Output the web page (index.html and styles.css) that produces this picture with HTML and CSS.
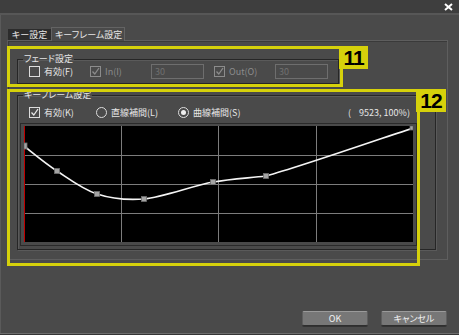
FILE: index.html
```html
<!DOCTYPE html>
<html lang="ja">
<head>
  <meta charset="UTF-8" />
  <title>キーフレーム設定</title>
  <link rel="stylesheet" href="styles.css">
</head>
<body>
  <div class="window">
    <div class="titlebar">
      <svg class="close" width="9" height="8" viewBox="0 0 9 8">
        <path d="M1 1 L8 7 M8 1 L1 7" stroke="#fff" stroke-width="2" fill="none"/>
      </svg>
    </div>

    <div class="tabs">
      <div class="tab">キー設定</div>
      <div class="tab active">キーフレーム設定</div>
    </div>

    <div class="page">
      <fieldset class="group fade">
        <legend>フェード設定</legend>
        <div class="row">
          <label class="opt w61"><span class="cb"></span>有効(F)</label>
          <label class="opt w61 off"><span class="cb checked"><svg width="9" height="9" viewBox="0 0 9 9"><path d="M1.5 4.5 L3.8 7 L8 1" stroke="#8c8c8c" stroke-width="1.3" fill="none"/></svg></span>In(I)</label>
          <div class="num">30</div>
          <label class="opt w61 off gap"><span class="cb checked"><svg width="9" height="9" viewBox="0 0 9 9"><path d="M1.5 4.5 L3.8 7 L8 1" stroke="#8c8c8c" stroke-width="1.3" fill="none"/></svg></span>Out(O)</label>
          <div class="num">30</div>
        </div>
      </fieldset>

      <fieldset class="group keys">
        <legend>キーフレーム設定</legend>
        <div class="row keyrow">
          <label class="opt w67"><span class="cb checked"><svg width="9" height="9" viewBox="0 0 9 9"><path d="M1.5 4.5 L3.8 7 L8 1" stroke="#e8e8e8" stroke-width="1.3" fill="none"/></svg></span>有効(K)</label>
          <label class="opt w82"><span class="rd"></span>直線補間(L)</label>
          <label class="opt w170"><span class="rd on"><span class="dot"></span></span>曲線補間(S)</label>
          <span class="value">(    9523, 100%)</span>
        </div>
        <div class="plot-frame">
          <svg class="plot" width="389" height="116" viewBox="0 0 389 116">
            <rect width="389" height="116" fill="#000"/>
            <g stroke="#7c7c7c" stroke-width="1">
              <line x1="97.5" y1="0" x2="97.5" y2="116"/>
              <line x1="194.5" y1="0" x2="194.5" y2="116"/>
              <line x1="292.5" y1="0" x2="292.5" y2="116"/>
              <line x1="0" y1="29.5" x2="389" y2="29.5"/>
              <line x1="0" y1="58.5" x2="389" y2="58.5"/>
              <line x1="0" y1="87.5" x2="389" y2="87.5"/>
            </g>
            <line x1="0.5" y1="0" x2="0.5" y2="116" stroke="#c00000"/>
            <path d="M0 20 C5.5 24.2 20.8 37 33 45 C45.2 53 58.5 63.3 73 68 C87.5 72.7 100.7 74.5 120 73 C139.3 71 168.7 59.8 189 56 C207 53 225 52 242 50 C275.3 41 364.5 10 389 2"
                  stroke="#f4f4f4" stroke-width="1.7" fill="none"/>
            <g fill="#a4a4a4" stroke="#6e6e6e" stroke-width="0.8">
              <rect x="0" y="17" width="3" height="6"/>
              <rect x="30.5" y="42.5" width="5" height="5"/>
              <rect x="70.5" y="65.5" width="5" height="5"/>
              <rect x="117.5" y="70.5" width="5" height="5"/>
              <rect x="186.5" y="53.5" width="5" height="5"/>
              <rect x="239.5" y="47.5" width="5" height="5"/>
              <rect x="386" y="0" width="3" height="4"/>
            </g>
          </svg>
        </div>
      </fieldset>
    </div>

    <div class="footer">
      <button class="btn">OK</button>
      <button class="btn">キャンセル</button>
    </div>
    <div class="bottom-line"></div>

    <!-- annotation overlays -->
    <div class="mark mark-11"></div>
    <div class="tag tag-11">11</div>
    <div class="mark mark-12"></div>
    <div class="tag tag-12">12</div>
  </div>
</body>
</html>
```

FILE: styles.css
```css
html, body {
  margin: 0; padding: 0;
  background: #4a4a4a;
}
.window {
  position: relative;
  width: 459px; height: 335px;
  overflow: hidden;
  background: #4a4a4a;
  color: #e6e6e6;
  font-family: "Noto Sans CJK JP", "Liberation Sans", sans-serif;
  font-size: 9px;
  font-feature-settings: "palt";
  box-shadow: inset 1px 0 0 #5a5a5a;
}

.titlebar {
  height: 13px;
  background: #3e3e3e;
  border-bottom: 2px solid #575757;
  display: flex; justify-content: flex-end; align-items: flex-start;
}
.close { margin: 3px 6px 0 0; }

/* tabs */
.tabs {
  display: flex; align-items: flex-end;
  margin-top: 11px; padding-left: 8px;
  height: 14px;
}
.tab {
  height: 11px; line-height: 11px;
  padding: 0 3px; width: 37px;
  text-align: center; white-space: nowrap;
  background: #2c2c2c;
}
.tab.active {
  height: 13px; line-height: 13px;
  width: 66px;
  background: #4a4a4a;
  border: 1px solid #636363; border-bottom: none;
  margin-bottom: -1px;
  position: relative; z-index: 1;
}

.page {
  margin-left: 7px;
  width: 441px; height: 220px;
  box-sizing: border-box;
  border: 1px solid #5e5e5e;
  border-left-color: #5a5a5a;
  box-shadow: inset 1px 1px 0 #3a3a3a;
}

/* group boxes */
.group {
  margin: 0 0 0 9px;
  padding: 0;
  border: 1px solid #262626;
  box-shadow: 1px 1px 0 #5a5a5a, inset 1px 1px 0 #5a5a5a;
  box-sizing: border-box;
  min-width: 0;
}
.group legend {
  margin-left: 5px;
  padding: 0 1px;
  line-height: 10px; height: 10px;
  white-space: nowrap;
}
.fade { margin-top: 13px; width: 322px; padding-bottom: 4px; }
.keys { margin-top: 6px; width: 419px; padding-bottom: 3px; }

.row {
  display: flex; align-items: center;
  height: 15px;
  padding-left: 11px;
}
.keyrow { height: 14px; margin-top: 5px; }

.opt {
  display: flex; align-items: center; gap: 4px;
  white-space: nowrap; flex-shrink: 0;
}
.w61 { width: 61px; }
.w67 { width: 67px; }
.w82 { width: 82px; }
.w170 { width: 170px; }
.gap { margin-left: 10px; }
.opt.off { color: #8c8c8c; }

.cb {
  width: 11px; height: 11px;
  box-sizing: border-box;
  border: 1px solid #dcdcdc;
  display: flex; align-items: center; justify-content: center;
}
.off .cb { border-color: #8c8c8c; }

.rd {
  width: 11px; height: 11px;
  box-sizing: border-box;
  border: 1px solid #dcdcdc;
  border-radius: 50%;
  display: flex; align-items: center; justify-content: center;
}
.rd .dot {
  width: 5px; height: 5px; border-radius: 50%;
  background: #efefef;
}

.num {
  width: 53px; height: 15px;
  box-sizing: border-box;
  border: 1px solid #6e6e6e;
  color: #707070;
  line-height: 13px;
  padding-left: 3px;
  flex-shrink: 0;
}

.value { white-space: pre; }

.plot-frame {
  margin: 4px 0 0 2px;
  width: 397px;
  box-sizing: border-box;
  border: 1px solid #2a2a2a;
  padding: 2px 3px 3px 3px;
}
.plot { display: block; }

/* buttons */
.footer {
  display: flex; justify-content: flex-end; gap: 13px;
  margin-top: 51px; padding-right: 12px;
  height: 15px;
}
.btn {
  width: 66px; height: 15px;
  padding: 0; margin: 0;
  font: inherit; font-size: 9px; line-height: 12px;
  color: #f2f2f2;
  background: #777;
  border: 1px solid #5e5e5e;
  border-top-color: #9a9a9a;
  border-bottom-color: #2e2e2e;
  border-radius: 2px;
  box-shadow: 0 1px 0 #333;
}
.bottom-line {
  margin-top: 7px;
  height: 1px; background: #6c6c6c;
  border-bottom: 1px solid #353535;
}

/* yellow annotations */
.mark {
  position: absolute;
  box-sizing: border-box;
  border: 3px solid #d6d10b;
}
.mark-11 { left: 7px; top: 46px; width: 336px; height: 41px; }
.mark-12 { left: 7px; top: 89px; width: 413px; height: 177px; }
.tag {
  position: absolute;
  background: #d6d10b;
  color: #000;
  font: bold 21px/23px "Liberation Sans", sans-serif;
  letter-spacing: -1px;
  text-align: center;
}
.tag-11 { left: 339px; top: 46px; width: 29px; height: 23px; }
.tag-12 { left: 416px; top: 89px; width: 30px; height: 23px; }
```
